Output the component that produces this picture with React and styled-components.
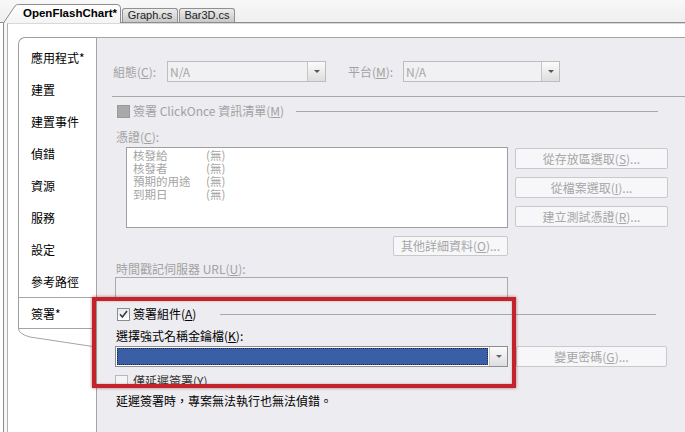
import React from 'react'
import styled, { createGlobalStyle } from 'styled-components'

const Global = createGlobalStyle`
  html, body {
    margin: 0;
    padding: 0;
    background: #fff;
  }
  body {
    font-family: "Noto Sans CJK TC", "Liberation Sans", sans-serif;
    font-size: 12px;
  }
`

const Page = styled.div`
  position: relative;
  width: 685px;
  height: 432px;
  overflow: hidden;
  display: flex;
  flex-direction: column;
  background: #fff;
`

const TabStrip = styled.div`
  height: 22px;
  display: flex;
  align-items: flex-end;
  padding-left: 3px;
  background: linear-gradient(#f8f8f8, #efefef);
  border-bottom: 1px solid #8d8d8d;
`

const ActiveTab = styled.div`
  position: relative;
  width: 118px;
  height: 19px;
  margin-bottom: -1px;
  padding-left: 20px;
  box-sizing: border-box;
  font-family: "Liberation Sans", Arial, sans-serif;
  font-weight: bold;
  font-size: 11.5px;
  line-height: 18px;
  color: #000;
  svg {
    position: absolute;
    left: 0;
    top: 0;
  }
  span {
    position: relative;
  }
`

const Tab = styled.div`
  width: 56px;
  height: 14px;
  margin-left: 1px;
  box-sizing: border-box;
  border: 1px solid #909090;
  border-bottom: none;
  border-radius: 3px 3px 0 0;
  background: linear-gradient(#ececec, #c8c8c8);
  font-family: "Liberation Sans", Arial, sans-serif;
  font-size: 11px;
  line-height: 13px;
  text-align: center;
  color: #222;
`

const Frame = styled.div`
  flex: 1;
  display: flex;
  margin-left: 3px;
  padding-left: 3px;
  border-left: 1px solid #8d8d8d;
  background: #f6f6f6;
`

const Sheet = styled.div`
  flex: 1;
  display: flex;
  padding: 13px 0 0 10px;
  border-left: 1px solid #b2b2b2;
  border-top: 1px solid #d8d8d8;
  background: #fff;
`

const Nav = styled.div`
  width: 78px;
  display: flex;
  flex-direction: column;
`

const NavList = styled.div`
  padding-top: 3px;
  border-left: 1px solid #9e9e9e;
  border-top: 1px solid #9e9e9e;
  border-top-left-radius: 7px;
  background: #fff;
`

const NavItem = styled.div`
  height: 32px;
  box-sizing: border-box;
  display: flex;
  align-items: center;
  padding-left: 12px;
  color: #000;
  font-size: 12px;
  border-top: 1px solid ${p => (p.$active ? '#a4a4a4' : 'transparent')};
  border-bottom: 1px solid ${p => (p.$active ? '#a4a4a4' : 'transparent')};
`

const Pane = styled.div`
  flex: 1;
  display: flex;
  flex-direction: column;
  padding-left: 16px;
  background: #edecf0;
  border-left: 1px solid #a4a4a4;
  border-top: 1px solid #a4a4a4;
`

const Row = styled.div`
  display: flex;
  align-items: center;
  margin-top: ${p => p.$top || 0}px;
  margin-left: ${p => p.$left || 0}px;
  height: ${p => p.$h || 14}px;
`

const Label = styled.div`
  width: ${p => (p.$w ? p.$w + 'px' : 'auto')};
  margin-left: ${p => p.$left || 0}px;
  line-height: 14px;
  color: ${p => p.$color || (p.$dim ? '#a2a2a2' : '#000')};
  white-space: nowrap;
`

const Combo = styled.div`
  width: ${p => p.$w}px;
  height: 21px;
  box-sizing: border-box;
  margin-left: ${p => p.$left || 0}px;
  display: flex;
  border: 1px solid ${p => (p.$dim ? '#bdbdbd' : '#8e8e8e')};
  background: ${p => (p.$dim ? '#f1f0f3' : '#fff')};
`

const ComboText = styled.div`
  flex: 1;
  padding-left: 2px;
  line-height: 19px;
  color: #a8a8a8;
`

const ComboSelected = styled.div`
  flex: 1;
  margin: 1px;
  background: #3a5fa6;
  outline: 1px dotted #1c2a45;
  outline-offset: -1px;
`

const DropButton = styled.div`
  width: 17px;
  display: flex;
  align-items: center;
  justify-content: center;
  border-left: 1px solid #c6c6c6;
  background: linear-gradient(#fbfbfb, #dedede);
  &::after {
    content: '';
    border-left: 3px solid transparent;
    border-right: 3px solid transparent;
    border-top: 3px solid ${p => (p.$dim ? '#555' : '#666')};
  }
`

const Rule = styled.div`
  height: 1px;
  background: #a7a7a7;
  margin-top: ${p => p.$top || 0}px;
  margin-left: -1px;
`

const Line = styled.div`
  flex: 1;
  height: 1px;
  background: #a7a7a7;
  margin-left: ${p => p.$left}px;
  margin-right: ${p => p.$right}px;
`

const Check = styled.div`
  width: 13px;
  height: 13px;
  box-sizing: border-box;
  margin-left: ${p => (p.$left !== undefined ? p.$left : 4)}px;
  margin-right: 3px;
  flex: none;
  display: flex;
  align-items: center;
  justify-content: center;
  border: 1px solid ${p => (p.$fill ? '#9a9a9a' : p.$off ? '#b8b8b8' : '#8c8c8c')};
  background: ${p => (p.$fill ? '#a9a9a9' : p.$off ? '#f4f4f6' : 'linear-gradient(#e9e9e9, #fff)')};
`

const ListArea = styled.div`
  display: flex;
  margin-top: 3px;
  margin-left: 13px;
`

const LeftCol = styled.div`
  width: 382px;
  display: flex;
  flex-direction: column;
  align-items: flex-end;
`

const ListBox = styled.div`
  width: 100%;
  height: 81px;
  box-sizing: border-box;
  padding: 1px 6px;
  border: 1px solid #9f9f9f;
  background: #fff;
  display: grid;
  grid-template-columns: 73px auto;
  grid-auto-rows: 13px;
  align-content: start;
  color: #a4a4a4;
  font-size: 11.5px;
  line-height: 13px;
  span {
    height: 13px;
    overflow: visible;
  }
`

const ButtonCol = styled.div`
  display: flex;
  flex-direction: column;
  gap: 8px;
  margin-left: 7px;
  margin-top: 1px;
`

const Button = styled.div`
  width: ${p => p.$w}px;
  height: ${p => p.$h || 21}px;
  box-sizing: border-box;
  margin-top: ${p => p.$top || 0}px;
  margin-left: ${p => p.$left || 0}px;
  border: 1px solid #c9c9cc;
  border-radius: 2px;
  background: #f7f7f9;
  color: #a6a6a6;
  text-align: center;
  line-height: ${p => (p.$h || 21) - 2}px;
`

const TextBox = styled.div`
  width: 393px;
  height: 23px;
  box-sizing: border-box;
  margin-top: 1px;
  margin-left: 2px;
  border: 1px solid #aaaaae;
  background: #efeef2;
`

const Highlight = styled.div`
  position: absolute;
  left: 92px;
  top: 297px;
  width: 424px;
  height: 91px;
  box-sizing: border-box;
  border: 4px solid #c5232b;
  box-shadow: 0 0 3px rgba(110, 20, 20, 0.55), inset 0 0 2px rgba(110, 20, 20, 0.4);
  pointer-events: none;
`

const navItems = ['應用程式*', '建置', '建置事件', '偵錯', '資源', '服務', '設定', '參考路徑', '簽署*']

const certRows = [
  ['核發給', '(無)'],
  ['核發者', '(無)'],
  ['預期的用途', '(無)'],
  ['到期日', '(無)'],
]

const CheckMark = () => (
  <svg width="9" height="9" viewBox="0 0 9 9">
    <path d="M1 4.2 L3.4 7 L8 1" fill="none" stroke="#2f3b59" strokeWidth="1.6" />
  </svg>
)

export default function App() {
  return (
    <Page>
      <Global />
      <TabStrip>
        <ActiveTab>
          <svg width="118" height="19" viewBox="0 0 118 19">
            <defs>
              <linearGradient id="tabg" x1="0" y1="0" x2="0" y2="1">
                <stop offset="0" stopColor="#ffffff" />
                <stop offset="1" stopColor="#f4f4f4" />
              </linearGradient>
            </defs>
            <path d="M0.5 19 L12 2 Q13 0.5 15.5 0.5 L114 0.5 Q117.5 0.5 117.5 4 L117.5 19" fill="url(#tabg)" stroke="#8d8d8d" />
          </svg>
          <span>OpenFlashChart*</span>
        </ActiveTab>
        <Tab>Graph.cs</Tab>
        <Tab>Bar3D.cs</Tab>
      </TabStrip>
      <Frame>
        <Sheet>
          <Nav>
            <NavList>
              {navItems.map((n, i) => (
                <NavItem key={n} $active={i === navItems.length - 1}>{n}</NavItem>
              ))}
            </NavList>
            <svg width="78" height="18" viewBox="0 0 78 18">
              <path d="M0.5 0 Q1 5 12 8 L78 18" fill="none" stroke="#a4a4a4" />
            </svg>
          </Nav>
          <Pane>
            <Row $top={23} $h={21}>
              <Label $dim $w={54}>組態(<u>C</u>):</Label>
              <Combo $dim $w={159}>
                <ComboText>N/A</ComboText>
                <DropButton $dim />
              </Combo>
              <Label $dim $w={55} $left={22}>平台(<u>M</u>):</Label>
              <Combo $dim $w={157}>
                <ComboText>N/A</ComboText>
                <DropButton $dim />
              </Combo>
            </Row>
            <Rule $top={14} />
            <Row $top={7}>
              <Check $fill />
              <Label $dim>簽署 ClickOnce 資訊清單(<u>M</u>)</Label>
              <Line $left={12} $right={27} />
            </Row>
            <Row $top={12} $left={3}>
              <Label $dim>憑證(<u>C</u>):</Label>
            </Row>
            <ListArea>
              <LeftCol>
                <ListBox>
                  {certRows.map(([k, v]) => (
                    <React.Fragment key={k}>
                      <span>{k}</span>
                      <span>{v}</span>
                    </React.Fragment>
                  ))}
                </ListBox>
                <Button $w={115} $h={20} $top={8}>其他詳細資料(<u>O</u>)...</Button>
              </LeftCol>
              <ButtonCol>
                <Button $w={153}>從存放區選取(<u>S</u>)...</Button>
                <Button $w={153}>從檔案選取(<u>I</u>)...</Button>
                <Button $w={153}>建立測試憑證(<u>R</u>)...</Button>
              </ButtonCol>
            </ListArea>
            <Row $top={6} $left={3}>
              <Label $dim>時間戳記伺服器 URL(<u>U</u>):</Label>
            </Row>
            <TextBox />
            <Row $top={7}>
              <Check><CheckMark /></Check>
              <Label>簽署組件(<u>A</u>)</Label>
              <Line $left={24} $right={29} />
            </Row>
            <Row $top={8} $left={3}>
              <Label>選擇強式名稱金鑰檔(<u>K</u>):</Label>
            </Row>
            <Row $top={3} $h={21}>
              <Combo $w={393} $left={2}>
                <ComboSelected />
                <DropButton />
              </Combo>
              <Button $w={151} $left={8}>變更密碼(<u>G</u>)...</Button>
            </Row>
            <Row $top={7}>
              <Check $off $left={2} />
              <Label $color="#333" $left={2}>僅延遲簽署(<u>Y</u>)</Label>
            </Row>
            <Row $top={6} $left={3}>
              <Label>延遲簽署時，專案無法執行也無法偵錯。</Label>
            </Row>
          </Pane>
        </Sheet>
      </Frame>
      <Highlight />
    </Page>
  )
}
